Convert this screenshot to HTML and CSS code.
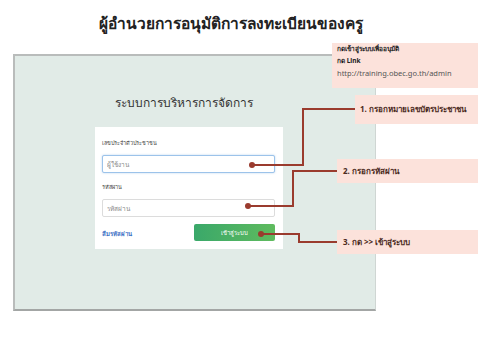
FILE: index.html
```html
<!DOCTYPE html>
<html lang="th">
<head>
  <meta charset="UTF-8">
  <meta name="viewport" content="width=device-width, initial-scale=1.0">
  <title>ขั้นตอนการอนุมัติ</title>
  <link rel="stylesheet" href="styles.css">
</head>
<body>
  <div class="page">
    <h1 class="page-title">ผู้อำนวยการอนุมัติการลงทะเบียนของครู</h1>

    <!-- ภาพหน้าจอระบบ -->
    <div class="shot">
      <div class="login-wrap">
        <h2>ระบบการบริหารการจัดการ</h2>
        <form class="login-card">
          <label class="field-label">เลขประจำตัวประชาชน</label>
          <input type="text" class="field focus" placeholder="ผู้ใช้งาน">
          <label class="field-label">รหัสผ่าน</label>
          <input type="password" class="field" placeholder="รหัสผ่าน">
          <div class="login-row">
            <a href="#" class="forgot">ลืมรหัสผ่าน</a>
            <button type="button" class="btn-login">เข้าสู่ระบบ</button>
          </div>
        </form>
      </div>
    </div>

    <!-- คำอธิบาย -->
    <div class="note note-top">
      <div class="strong">กดเข้าสู่ระบบเพื่ออนุมัติ</div>
      <div class="strong">กด Link</div>
      <div class="url">http://training.obec.go.th/admin</div>
    </div>
    <div class="note step step-1">1. กรอกหมายเลขบัตรประชาชน</div>
    <div class="note step step-2">2. กรอกรหัสผ่าน</div>
    <div class="note step step-3">3. กด &gt;&gt; เข้าสู่ระบบ</div>

    <svg class="connectors" width="480" height="360" viewBox="0 0 480 360">
      <g fill="none" stroke="#9a3b2e" stroke-width="2">
        <polyline points="252,165 303,165 303,109 355,109"/>
        <polyline points="248,206 293,206 293,171 337,171"/>
        <polyline points="261,234 299,234 299,242 337,242"/>
      </g>
      <g fill="#9a3b2e">
        <circle cx="252" cy="165" r="3"/>
        <circle cx="248" cy="206" r="3"/>
        <circle cx="261" cy="234" r="3"/>
      </g>
    </svg>
  </div>
</body>
</html>
```

FILE: styles.css
```css
body {
  margin: 0;
  background: #fff;
  font-family: "Noto Sans", "DejaVu Sans", sans-serif;
  color: #333;
}
.page {
  position: relative;
  width: 480px;
  height: 360px;
  overflow: hidden;
}
.page-title {
  margin: 0;
  padding: 8px 18px 0 0;
  font-size: 15.5px;
  line-height: 30px;
  font-weight: 600;
  text-align: center;
  color: #222;
}
.shot {
  box-sizing: border-box;
  margin: 16px 0 0 13px;
  width: 363px;
  height: 257px;
  padding-top: 37px;
  background: #e1ebe7;
  border-top: 2px solid #b9bcbb;
  border-left: 2px solid #b9bcbb;
  border-bottom: 2px solid #a3a6a5;
  border-right: 1px solid #cfd6d3;
}
.login-wrap {
  width: 188px;
  margin-left: 80px;
}
.login-wrap h2 {
  margin: 0 0 14px;
  padding-right: 10px;
  font-size: 12px;
  line-height: 20px;
  font-weight: normal;
  text-align: center;
  color: #333;
}
.login-card {
  display: flex;
  flex-direction: column;
  box-sizing: border-box;
  height: 122px;
  padding: 10px 8px 0 7px;
  background: #fff;
}
.field-label {
  font-size: 5.5px;
  line-height: 12px;
  color: #444;
}
.field {
  box-sizing: border-box;
  height: 18px;
  margin: 6px 0 8px;
  padding: 0 4px;
  font-family: inherit;
  font-size: 6.5px;
  border: 1px solid #dcdcdc;
  border-radius: 2px;
  background: #fff;
  outline: none;
}
.field::placeholder {
  color: #8a8a8a;
}
.field.focus {
  border-color: #9cc3ea;
  box-shadow: 0 0 2px rgba(102, 160, 220, 0.5);
}
.login-row {
  display: flex;
  align-items: center;
  justify-content: space-between;
  margin-top: -1px;
}
.forgot {
  padding-top: 2px;
  font-size: 6px;
  font-weight: bold;
  color: #3a6fc4;
  text-decoration: none;
}
.btn-login {
  width: 81px;
  height: 17px;
  padding: 0;
  font-family: inherit;
  font-size: 6px;
  color: #fff;
  background: linear-gradient(to right, #3aa86a, #5fbb5e);
  border: none;
  border-radius: 2px;
}
.note {
  position: absolute;
  box-sizing: border-box;
  background: #fce2db;
  color: #4b2a22;
  font-size: 8px;
}
.note-top {
  left: 332px;
  top: 43px;
  width: 146px;
  height: 45px;
  padding: 0 5px;
  line-height: 12px;
}
.note-top .strong {
  font-size: 6.5px;
  font-weight: bold;
  color: #222;
}
.note-top .url {
  font-size: 7.5px;
  color: #555;
}
.step {
  display: flex;
  align-items: center;
  font-weight: bold;
}
.step-1 {
  left: 355px;
  top: 95px;
  width: 123px;
  height: 29px;
  padding-left: 5px;
}
.step-2 {
  left: 337px;
  top: 159px;
  width: 141px;
  height: 24px;
  padding-left: 6px;
}
.step-3 {
  left: 337px;
  top: 230px;
  width: 141px;
  height: 24px;
  padding-left: 6px;
}
.connectors {
  position: absolute;
  left: 0;
  top: 0;
  pointer-events: none;
}
```
